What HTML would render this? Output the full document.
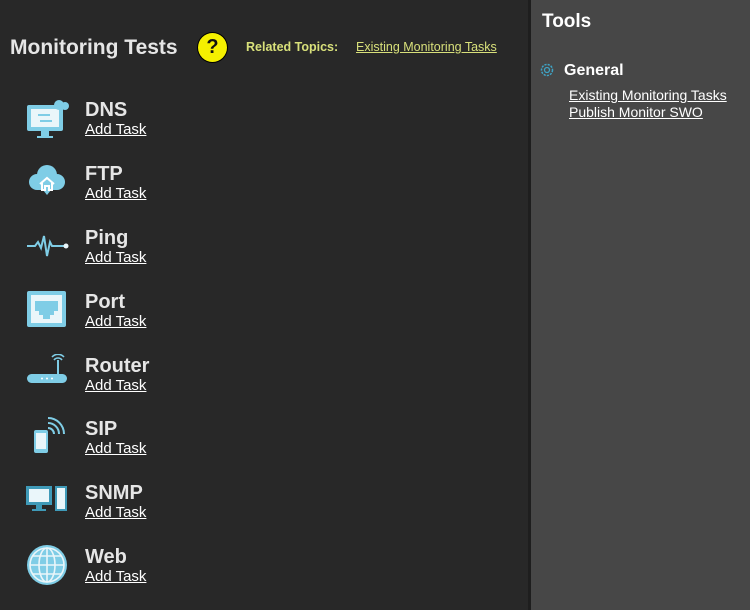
<!DOCTYPE html>
<html><head><style>
body{margin:0;width:750px;height:610px;background:#282828;font-family:"Liberation Sans",sans-serif;position:relative;overflow:hidden}
.left{position:absolute;left:0;top:0;width:528px;height:610px;background:#282828}
.sep{position:absolute;left:528px;top:0;width:3px;height:610px;background:#1e1e1e}
.right{position:absolute;left:531px;top:0;width:219px;height:610px;background:#474747}
h1{position:absolute;left:10px;top:36px;margin:0;font-size:21px;color:#e6e6e6;font-weight:bold}
.q{position:absolute;left:198px;top:33px;width:29px;height:29px;border-radius:50%;background:#f5f000;color:#111;font-weight:bold;font-size:20px;text-align:center;line-height:29px;box-shadow:0 0 0 1px #000}
.rt{position:absolute;left:246px;top:40px;font-size:12.5px;color:#d8e07a;font-weight:bold}
.rl{position:absolute;left:356px;top:40px;font-size:12.5px;color:#d8e07a;text-decoration:underline}
.row{position:absolute;left:0;height:60px}
.row svg{position:absolute;left:24px;top:0}
.t{position:absolute;left:85px;top:1px;font-size:20px;font-weight:bold;color:#e6e6e6;white-space:nowrap}
.a{position:absolute;left:85px;top:23px;font-size:15px;color:#fff;text-decoration:underline;white-space:nowrap}
.tools{position:absolute;left:542px;top:11px;font-size:19px;font-weight:bold;color:#fff}
.gen{position:absolute;left:564px;top:62px;font-size:16px;font-weight:bold;color:#fff}
.lk{position:absolute;left:569px;font-size:14px;color:#fff;text-decoration:underline;white-space:nowrap}
</style></head><body>
<div class="left"></div><div class="sep"></div><div class="right"></div>
<h1>Monitoring Tests</h1>
<div class="q">?</div>
<div class="rt">Related Topics:</div>
<div class="rl">Existing Monitoring Tasks</div>

<div class="row" style="top:98px"><svg width="50" height="42" viewBox="0 0 50 42"><rect x="3" y="7" width="36" height="26" rx="2" fill="#7fcde6"/><rect x="7" y="11" width="28" height="18" fill="#eaf6fa"/><rect x="17" y="33" width="8" height="5" fill="#7fcde6"/><rect x="13" y="38" width="16" height="2" fill="#7fcde6"/><path d="M14 17h12M16 23h12" stroke="#7fcde6" stroke-width="2"/><circle cx="35" cy="7" r="5" fill="#7fcde6"/><circle cx="41" cy="8" r="4" fill="#7fcde6"/></svg><div class="t">DNS</div><div class="a">Add Task</div></div>

<div class="row" style="top:162px"><svg width="50" height="42" viewBox="0 0 50 42"><circle cx="13" cy="20" r="8" fill="#7fcde6"/><circle cx="23" cy="13" r="10" fill="#7fcde6"/><circle cx="33" cy="20" r="8" fill="#7fcde6"/><rect x="13" y="18" width="20" height="10" fill="#7fcde6"/><path d="M19 28l4 5 4-5z" fill="#7fcde6"/><path d="M16 22l7-6 7 6M18 21v7h3v-4h4v4h3v-7" stroke="#fff" stroke-width="2" fill="none"/></svg><div class="t">FTP</div><div class="a">Add Task</div></div>

<div class="row" style="top:226px"><svg width="50" height="42" viewBox="0 0 50 42"><path d="M3 20h8l3-4 3 6 3-12 3 20 3-14 2 4h16" stroke="#7fcde6" stroke-width="2" fill="none"/><circle cx="42" cy="20" r="2.5" fill="#eaf6fa"/></svg><div class="t">Ping</div><div class="a">Add Task</div></div>

<div class="row" style="top:290px"><svg width="50" height="42" viewBox="0 0 50 42"><rect x="3" y="1" width="39" height="36" rx="2" fill="#7fcde6"/><rect x="7" y="5" width="31" height="28" fill="#eaf6fa"/><path d="M11 11h23v10h-4v4h-4v4h-7v-4h-4v-4h-4z" fill="#7fcde6"/></svg><div class="t">Port</div><div class="a">Add Task</div></div>

<div class="row" style="top:354px"><svg width="50" height="42" viewBox="0 0 50 42"><rect x="3" y="20" width="40" height="9" rx="4.5" fill="#7fcde6"/><circle cx="18" cy="24.5" r="1" fill="#fff"/><circle cx="23" cy="24.5" r="1" fill="#fff"/><circle cx="28" cy="24.5" r="1" fill="#fff"/><path d="M34 20V6" stroke="#7fcde6" stroke-width="2"/><path d="M30 6a5 5 0 0 1 8 0M28 3a8 8 0 0 1 12 0" stroke="#7fcde6" stroke-width="1.6" fill="none"/></svg><div class="t">Router</div><div class="a">Add Task</div></div>

<div class="row" style="top:417px"><svg width="50" height="42" viewBox="0 0 50 42"><rect x="10" y="13" width="14" height="23" rx="2" fill="#7fcde6"/><rect x="12" y="16" width="10" height="16" fill="#eaf6fa"/><path d="M24 11a6 6 0 0 1 6 6M24 6a11 11 0 0 1 11 11M24 1a16 16 0 0 1 16 16" stroke="#7fcde6" stroke-width="2" fill="none"/></svg><div class="t">SIP</div><div class="a">Add Task</div></div>

<div class="row" style="top:481px"><svg width="50" height="42" viewBox="0 0 50 42"><rect x="2" y="5" width="26" height="19" fill="#3f9ab8"/><rect x="5" y="8" width="20" height="13" fill="#eaf6fa"/><rect x="12" y="24" width="6" height="4" fill="#3f9ab8"/><rect x="8" y="28" width="14" height="2" fill="#3f9ab8"/><rect x="31" y="5" width="12" height="25" fill="#3f9ab8"/><rect x="33" y="7" width="8" height="21" fill="#eaf6fa"/></svg><div class="t">SNMP</div><div class="a">Add Task</div></div>

<div class="row" style="top:545px"><svg width="50" height="42" viewBox="0 0 50 42"><circle cx="23" cy="20" r="20" fill="#7fcde6"/><g stroke="#eaf6fa" stroke-width="1.6" fill="none"><circle cx="23" cy="20" r="17"/><ellipse cx="23" cy="20" rx="8" ry="17"/><path d="M23 3v34M6 20h34M9 11h28M9 29h28"/></g></svg><div class="t">Web</div><div class="a">Add Task</div></div>

<div class="tools">Tools</div>
<svg style="position:absolute;left:539px;top:62px" width="16" height="16" viewBox="0 0 16 16"><circle cx="8" cy="8" r="5.5" stroke="#3fa3c4" stroke-width="1.5" fill="none" stroke-dasharray="2.2 1.1"/><circle cx="8" cy="8" r="2.5" stroke="#3fa3c4" stroke-width="1.3" fill="none"/></svg>
<div class="gen">General</div>
<div class="lk" style="top:87px">Existing Monitoring Tasks</div>
<div class="lk" style="top:104px">Publish Monitor SWO</div>
</body></html>
